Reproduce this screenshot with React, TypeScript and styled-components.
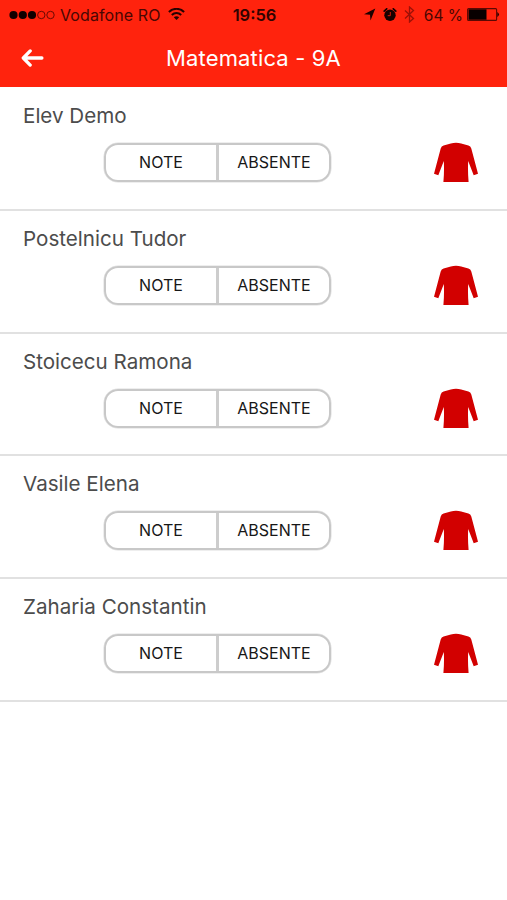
import React from "react";
import styled, { createGlobalStyle } from "styled-components";

const GlobalStyle = createGlobalStyle`
  * { box-sizing: border-box; }
  body { margin: 0; background: #fff; font-family: Inter, "Liberation Sans", sans-serif; }
`;

const Screen = styled.div`
  width: 507px;
  height: 900px;
  overflow: hidden;
  background: #fff;
`;

const Header = styled.header`
  height: 87px;
  background: #ff230d;
`;

const StatusBar = styled.div`
  height: 30px;
  display: grid;
  grid-template-columns: 1fr 50px 1fr;
  align-items: center;
  padding: 0 7px 0 9px;
  color: #4a0703;
  font-size: 16px;
  line-height: 30px;
`;

const StatusGroup = styled.div<{ $end?: boolean }>`
  display: flex;
  align-items: center;
  justify-content: ${(p) => (p.$end ? "flex-end" : "flex-start")};
  height: 30px;
  white-space: nowrap;
  svg { display: block; flex: none; margin-bottom: 1px; }
`;

const Carrier = styled.span`
  height: 30px;
  margin: 0 7px 0 4px;
  letter-spacing: 0.1px;
`;

const Clock = styled.div`
  height: 30px;
  font-weight: 600;
  text-align: center;
  color: #300301;
  white-space: nowrap;
  font-size: 16.5px;
`;

const StatusIcons = styled.div`
  display: flex;
  align-items: center;
  gap: 7px;
`;

const Percent = styled.span`
  height: 30px;
  margin: 0 4px 0 9px;
  font-size: 15.5px;
  line-height: 31px;
`;

const NavBar = styled.div`
  height: 55px;
  display: grid;
  grid-template-columns: 60px 1fr 60px;
  align-items: center;
`;

const BackButton = styled.button`
  border: 0;
  padding: 0 0 0 21px;
  background: none;
  svg { display: block; }
`;

const Title = styled.h1`
  margin: 0;
  text-align: center;
  font-size: 22px;
  font-weight: 400;
  letter-spacing: 0.15px;
  line-height: 54px;
  color: #fff;
`;

const List = styled.ul`
  margin: 0;
  padding: 1px 0 0;
  list-style: none;
`;

const Row = styled.li`
  height: 122.75px;
  padding: 14px 28px 0 23px;
  border-bottom: 2px solid #e1e1e1;
`;

const Name = styled.div`
  height: 28px;
  line-height: 28px;
  font-size: 20.6px;
  color: #4c4c4c;
`;

const Actions = styled.div`
  display: flex;
  justify-content: space-between;
  padding: 13px 0 0 81px;
  svg { display: block; margin-top: -1px; }
`;

const Segments = styled.div`
  width: 227px;
  height: 39px;
  display: flex;
  border: 2px solid #c8c8c8;
  border-radius: 14px;
  box-shadow: 0 0 0 0.5px #dedede;
`;

const Segment = styled.button`
  flex: 1;
  border: 0;
  padding: 0 0 1px;
  background: none;
  font: 400 16px/34px Inter, "Liberation Sans", sans-serif;
  color: #171717;
  & + & { border-left: 3px solid #cdcdcd; }
`;

const Signal = () => (
  <svg width="47" height="12" viewBox="0 0 47 12">
    {[4.5, 13.8, 23].map((x) => <circle key={x} cx={x} cy="6" r="4.1" fill="#100000" />)}
    {[32.3, 41.5].map((x) => (
      <circle key={x} cx={x} cy="6" r="3.7" fill="none" stroke="#6b0903" strokeWidth="1" />
    ))}
  </svg>
);

const Wifi = () => (
  <svg width="17" height="13" viewBox="0 0 17 13" fill="none" stroke="#250201" strokeWidth="2">
    <path d="M.9 4C5.1-.2 11.9-.2 16.1 4M3.8 7c2.7-2.6 6.7-2.6 9.4 0" />
    <path d="M8.5 12 5.8 9.3c1.5-1.4 3.9-1.4 5.4 0Z" fill="#250201" stroke="none" />
  </svg>
);

const Location = () => (
  <svg width="13" height="13" viewBox="0 0 13 13">
    <path d="M12.3.6 7.5 12.6 7 6.8 1 6.3Z" fill="#1c0100" />
  </svg>
);

const Alarm = () => (
  <svg width="14" height="14" viewBox="0 0 14 14">
    <circle cx="7" cy="7.3" r="5.7" fill="#160100" />
    <path d="M1.2 3.1 3.7.8M12.8 3.1 10.3.8" stroke="#160100" strokeWidth="1.7" strokeLinecap="round" />
    <path d="M7.3 4v3.7H4.7" fill="none" stroke="#d51a09" strokeWidth="1" />
  </svg>
);

const Bluetooth = () => (
  <svg width="11" height="17" viewBox="0 0 11 17">
    <path d="m1 4.5 8.5 8L5.5 16V1l4 3.5-8.5 8" fill="none" stroke="#9c1107" strokeWidth="1.3" />
  </svg>
);

const Battery = () => (
  <svg width="33" height="13" viewBox="0 0 33 13">
    <rect x=".6" y=".6" width="29" height="11.8" rx="1" fill="none" stroke="#5a0903" strokeWidth="1.1" />
    <rect x="1.5" y="1.3" width="18" height="10.4" fill="#080000" />
    <path d="M30.3 3.9q3.4 2.6 0 5.2Z" fill="#200100" />
  </svg>
);

const BackArrow = () => (
  <svg width="23" height="20" viewBox="0 0 23 20">
    <path d="M9.2 2.9 2.3 10l6.9 7.1M2.8 10h18.1" fill="none" stroke="#fff" strokeWidth="3.3" strokeLinecap="round" strokeLinejoin="round" />
  </svg>
);

const Shirt = () => (
  <svg width="46" height="41" viewBox="0 0 46 41">
    <path
      d="M17.8 1.5Q23-.2 28.2 1.5L35.4 3.4Q37.6 4 38.3 6.5L45 31.7 40.7 33.3 35.2 19Q34.6 28 35.6 40H10.4Q11.4 28 10.8 19L5.3 33.3 1 31.7 7.7 6.5Q8.4 4 10.6 3.4Z"
      fill="#d20000"
    />
  </svg>
);

const students = ["Elev Demo", "Postelnicu Tudor", "Stoicecu Ramona", "Vasile Elena", "Zaharia Constantin"];

export default function App() {
  return (
    <Screen>
      <GlobalStyle />
      <Header>
        <StatusBar>
          <StatusGroup>
            <Signal />
            <Carrier>Vodafone RO</Carrier>
            <Wifi />
          </StatusGroup>
          <Clock>19:56</Clock>
          <StatusGroup $end>
            <StatusIcons>
              <Location />
              <Alarm />
              <Bluetooth />
            </StatusIcons>
            <Percent>64 %</Percent>
            <Battery />
          </StatusGroup>
        </StatusBar>
        <NavBar>
          <BackButton aria-label="Back"><BackArrow /></BackButton>
          <Title>Matematica - 9A</Title>
        </NavBar>
      </Header>
      <List>
        {students.map((name) => (
          <Row key={name}>
            <Name>{name}</Name>
            <Actions>
              <Segments>
                <Segment>NOTE</Segment>
                <Segment>ABSENTE</Segment>
              </Segments>
              <Shirt />
            </Actions>
          </Row>
        ))}
      </List>
    </Screen>
  );
}
